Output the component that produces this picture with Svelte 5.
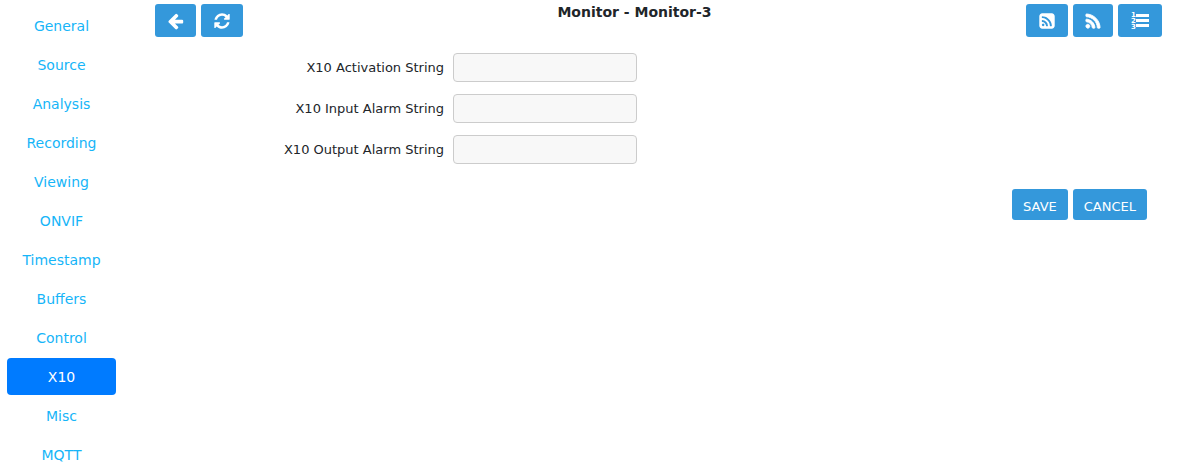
<script>
  const tabs = [
    'General', 'Source', 'Analysis', 'Recording', 'Viewing', 'ONVIF',
    'Timestamp', 'Buffers', 'Control', 'X10', 'Misc', 'MQTT',
  ];
  let active = $state('X10');

  const fields = [
    { id: 'x10-activation', label: 'X10 Activation String' },
    { id: 'x10-alarm-input', label: 'X10 Input Alarm String' },
    { id: 'x10-alarm-output', label: 'X10 Output Alarm String' },
  ];
</script>

<div class="page">
  <nav class="tabs">
    {#each tabs as tab}
      <a href={'#' + tab.toLowerCase()} class:active={tab === active} onclick={() => (active = tab)}>{tab}</a>
    {/each}
  </nav>

  <main>
    <header>
      <div class="group">
        <button class="tool" type="button" aria-label="Back">
          <svg width="17" height="18" viewBox="50 0 1692 1792"><path d="M1664 896v128q0 53-32.5 90.5t-84.5 37.5h-704l293 294q38 36 38 90t-38 90l-75 76q-37 37-90 37-52 0-91-37l-651-652q-37-37-37-90 0-52 37-91l651-650q38-38 91-38 52 0 90 38l75 74q38 38 38 91t-38 91l-293 293h704q52 0 84.5 37.5t32.5 90.5z" /></svg>
        </button>
        <button class="tool" type="button" aria-label="Refresh">
          <svg width="18" height="18" viewBox="0 0 1792 1792"><path d="M1639 1056q0 5-1 7-64 268-268 434.5t-478 166.5q-146 0-282.5-55t-243.5-157l-129 129q-19 19-45 19t-45-19-19-45v-448q0-26 19-45t45-19h448q26 0 45 19t19 45-19 45l-137 137q71 66 161 102t187 36q134 0 250-65t186-179q11-17 53-117 8-23 30-23h192q13 0 22.5 9.5t9.5 22.5zm25-800v448q0 26-19 45t-45 19h-448q-26 0-45-19t-19-45 19-45l138-138q-148-137-349-137-134 0-250 65t-186 179q-11 17-53 117-8 23-30 23h-199q-13 0-22.5-9.5t-9.5-22.5v-7q65-268 270-434.5t480-166.5q146 0 284 55.5t245 156.5l130-129q19-19 45-19t45 19 19 45z" /></svg>
        </button>
      </div>
      <h2>Monitor - Monitor-3</h2>
      <div class="group">
        <button class="tool" type="button" aria-label="Probe">
          <svg width="18" height="18" viewBox="0 0 1792 1792"><path d="M640 1280q0-53-37.5-90.5t-90.5-37.5-90.5 37.5-37.5 90.5 37.5 90.5 90.5 37.5 90.5-37.5 37.5-90.5zm351 94q-13-232-177-396t-396-177q-14-1-24 9t-10 23v128q0 13 8.5 22t21.5 10q154 11 264 121t121 264q1 13 10 21.5t22 8.5h128q13 0 23-10t9-24zm384 1q-5-154-56-297.5t-139.5-260-205-205-260-139.5-297.5-56q-14-1-23 9-10 10-10 23v128q0 13 9 22t22 10q204 7 378 111.5t278.5 278.5 111.5 378q1 13 10 22t22 9h128q13 0 23-10 11-9 9-23zm289-959v960q0 119-84.5 203.5t-203.5 84.5h-960q-119 0-203.5-84.5t-84.5-203.5v-960q0-119 84.5-203.5t203.5-84.5h960q119 0 203.5 84.5t84.5 203.5z" /></svg>
        </button>
        <button class="tool" type="button" aria-label="ONVIF probe">
          <svg width="16" height="18" viewBox="100 -70 1592 1792"><path stroke="currentColor" stroke-width="90" d="M576 1344q0 80-56 136t-136 56-136-56-56-136 56-136 136-56 136 56 56 136zm512 123q2 28-17 48-18 21-47 21h-135q-25 0-43-16.5t-20-41.5q-22-229-184.5-391.5t-391.5-184.5q-25-2-41.5-20t-16.5-43v-135q0-29 21-47 17-17 43-17h5q160 13 306 80.5t259 181.5q114 113 181.5 259t80.5 306zm512 2q2 27-18 47-18 20-46 20h-143q-26 0-44.5-17.5t-19.5-42.5q-12-215-101-408.5t-231.5-336-336-231.5-408.5-102q-25-1-42.5-19.5t-17.5-43.5v-143q0-28 20-46 18-18 44-18h3q262 13 501.5 120t425.5 294q187 186 294 425.5t120 501.5z" /></svg>
        </button>
        <button class="tool" type="button" aria-label="Presets">
          <svg width="20" height="21" viewBox="0 0 20 21">
            <g class="digits"><text x="1" y="7">1</text><text x="1" y="13">2</text><text x="1" y="19">3</text></g>
            <path d="M6 4h13v3h-13zM6 9h13v3h-13zM6 14h13v3h-13z" />
          </svg>
        </button>
      </div>
    </header>

    <form onsubmit={(e) => e.preventDefault()}>
      {#each fields as field}
        <div class="row">
          <label for={field.id}>{field.label}</label>
          <input id={field.id} type="text" />
        </div>
      {/each}
      <div class="actions">
        <button type="submit">SAVE</button>
        <button type="button">CANCEL</button>
      </div>
    </form>
  </main>
</div>

<style>
  :global(body) {
    margin: 0;
    background: #fff;
  }
  .page {
    display: flex;
    align-items: flex-start;
    font-family: Verdana, 'DejaVu Sans', sans-serif;
    font-size: 13px;
    color: #212529;
  }
  .tabs {
    display: flex;
    flex-direction: column;
    gap: 2px;
    flex: none;
    min-width: 109px;
    padding: 7px 7px 0;
  }
  .tabs a {
    padding: 9px 12px 7px;
    border-radius: 4px;
    font-size: 14px;
    line-height: 21px;
    text-align: center;
    text-decoration: none;
    color: #16b5f8;
  }
  .tabs a.active {
    background: #007bff;
    color: #fff;
  }
  main {
    flex: 1;
    min-width: 0;
    padding: 4px 15px 0 32px;
  }
  header {
    display: flex;
    justify-content: space-between;
    align-items: flex-start;
  }
  .group {
    display: flex;
    gap: 5px;
  }
  h2 {
    margin: 0;
    font-size: 14px;
    line-height: 16px;
    font-weight: 700;
  }
  button {
    border: 0;
    border-radius: 3px;
    background: #3498db;
    color: #fff;
    font: inherit;
    cursor: pointer;
  }
  .tool {
    display: flex;
    align-items: center;
    height: 33px;
    padding: 0 12px;
  }
  svg {
    display: block;
    fill: currentColor;
  }
  .digits {
    font-size: 7px;
    font-weight: 700;
  }
  form {
    display: flex;
    flex-direction: column;
    gap: 12px;
    padding-top: 16px;
  }
  .row {
    display: flex;
    align-items: center;
    gap: 6px;
  }
  label {
    box-sizing: border-box;
    width: 29%;
    padding-right: 3px;
    text-align: right;
  }
  input {
    box-sizing: border-box;
    width: 184px;
    height: 29px;
    padding: 4px 8px;
    border: 1px solid #ccc;
    border-radius: 4px;
    background: #f8f8f8;
    font: inherit;
  }
  .actions {
    display: flex;
    justify-content: flex-end;
    gap: 5px;
    padding: 13px 15px 0 0;
  }
  .actions button {
    height: 31px;
    padding: 3px 11px 0;
  }
</style>
